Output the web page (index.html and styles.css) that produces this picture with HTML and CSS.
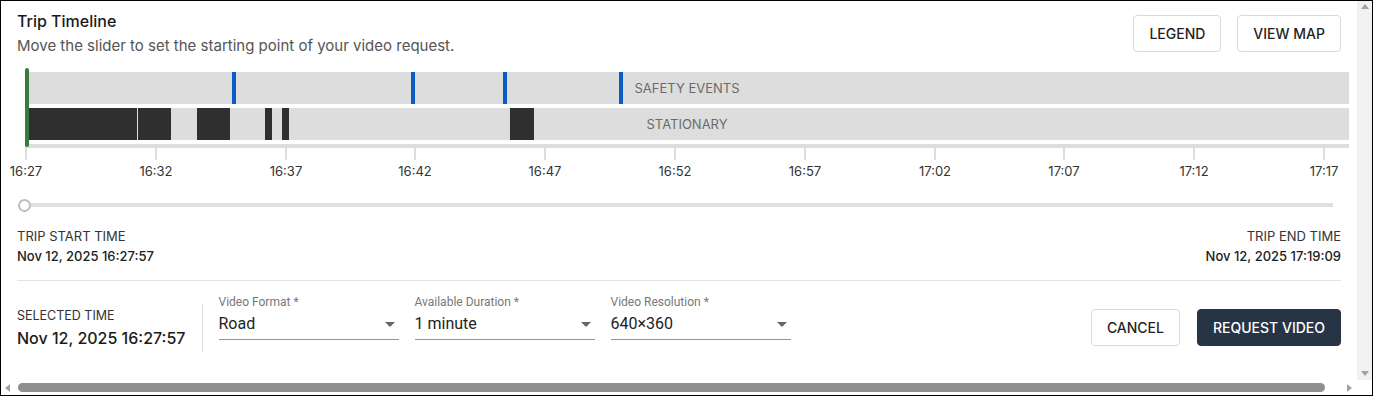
FILE: index.html
```html
<!DOCTYPE html>
<html lang="en">
  <head>
    <meta charset="utf-8" />
    <meta name="viewport" content="width=device-width, initial-scale=1.0" />
    <title>Trip Timeline</title>
    <link rel="stylesheet" href="styles.css">
  </head>

  <body>
    <div class="frame">
      <div class="view">
        <main class="content">
          <!-- ______HEADER______ -->
          <header class="top">
            <div>
              <h1>Trip Timeline</h1>
              <p class="hint">Move the slider to set the starting point of your video request.</p>
            </div>
            <div class="tools">
              <button class="btn">Legend</button>
              <button class="btn">View map</button>
            </div>
          </header>

          <!-- ______TIMELINE______ -->
          <section class="timeline">
            <div class="cursor"></div>
            <div class="lane">
              <span class="event" style="left:207px"></span>
              <span class="event" style="left:386px"></span>
              <span class="event" style="left:478px"></span>
              <span class="event" style="left:594px"></span>
              <span class="lane-name">Safety events</span>
            </div>
            <div class="lane">
              <span class="stop" style="left:0;width:112px"></span>
              <span class="stop" style="left:113px;width:33px"></span>
              <span class="stop" style="left:172px;width:33px"></span>
              <span class="stop" style="left:240px;width:7px"></span>
              <span class="stop" style="left:257px;width:7px"></span>
              <span class="stop" style="left:485px;width:24px"></span>
              <span class="lane-name">Stationary</span>
            </div>
            <div class="axis"></div>
            <div class="ticks">
              <span class="tick" style="left:0px"><b>16:27</b></span>
              <span class="tick" style="left:130px"><b>16:32</b></span>
              <span class="tick" style="left:260px"><b>16:37</b></span>
              <span class="tick" style="left:389px"><b>16:42</b></span>
              <span class="tick" style="left:519px"><b>16:47</b></span>
              <span class="tick" style="left:649px"><b>16:52</b></span>
              <span class="tick" style="left:779px"><b>16:57</b></span>
              <span class="tick" style="left:909px"><b>17:02</b></span>
              <span class="tick" style="left:1038px"><b>17:07</b></span>
              <span class="tick" style="left:1168px"><b>17:12</b></span>
              <span class="tick" style="left:1298px"><b>17:17</b></span>
            </div>
          </section>

          <div class="slider">
            <span class="knob"></span>
            <span class="track"></span>
          </div>

          <div class="trip-info">
            <div>
              <p class="small-label">Trip start time</p>
              <p class="small-value">Nov 12, 2025 16:27:57</p>
            </div>
            <div class="end">
              <p class="small-label">Trip end time</p>
              <p class="small-value">Nov 12, 2025 17:19:09</p>
            </div>
          </div>

          <hr class="line" />

          <!-- ______REQUEST ROW______ -->
          <div class="request">
            <div class="selected">
              <p class="sel-label">Selected time</p>
              <p class="sel-value">Nov 12, 2025 16:27:57</p>
            </div>
            <div class="vline"></div>
            <div class="field">
              <label>Video Format *</label>
              <div class="select">Road<span class="caret"></span></div>
            </div>
            <div class="field">
              <label>Available Duration *</label>
              <div class="select">1 minute<span class="caret"></span></div>
            </div>
            <div class="field">
              <label>Video Resolution *</label>
              <div class="select">640×360<span class="caret"></span></div>
            </div>
            <div class="actions">
              <button class="btn">Cancel</button>
              <button class="btn dark">Request video</button>
            </div>
          </div>
        </main>

        <div class="vbar">
          <span class="arrow up"></span>
          <span class="arrow down"></span>
        </div>
      </div>

      <div class="hbar">
        <span class="arrow left"></span>
        <span class="thumb"></span>
        <span class="arrow right"></span>
      </div>
    </div>
  </body>
</html>
```

FILE: styles.css
```css
* {
  box-sizing: border-box;
}

body {
  margin: 0;
  font-family: Inter, "Liberation Sans", sans-serif;
  color: #1f1f1f;
}

p,
h1 {
  margin: 0;
}

.frame {
  width: 1373px;
  height: 396px;
  border: 1px solid #000;
  display: flex;
  flex-direction: column;
  overflow: hidden;
}

.view {
  display: flex;
  height: 379px;
}

.content {
  flex: 1;
  padding: 10px 16px 0;
  overflow: hidden;
}

/*_____HEADER_____*/

.top {
  display: flex;
  justify-content: space-between;
}

h1 {
  font-size: 16px;
  font-weight: 500;
  line-height: 20px;
  color: #1a1a1a;
}

.hint {
  margin-top: 5px;
  font-size: 15px;
  line-height: 20px;
  color: #555;
}

.tools {
  display: flex;
  gap: 16px;
  margin-top: 4px;
}

.btn {
  height: 37px;
  padding: 0 15px;
  border: 1px solid #d9d9d9;
  border-radius: 4px;
  background: #fff;
  font-family: Inter, "Liberation Sans", sans-serif;
  font-size: 14px;
  font-weight: 500;
  color: #1f1f1f;
  text-transform: uppercase;
}

.btn.dark {
  background: #263445;
  border-color: #263445;
  color: #fff;
}

/*_____TIMELINE_____*/

.timeline {
  position: relative;
  margin: 12px -8px 0 8px;
  padding-top: 4px;
}

.cursor {
  position: absolute;
  left: 0;
  top: 0;
  width: 4px;
  height: 79px;
  border-radius: 2px;
  background: #3a7a3e;
  z-index: 2;
}

.lane {
  position: relative;
  height: 32px;
  margin-bottom: 4px;
  background: #dddddd;
  display: flex;
  align-items: center;
  justify-content: center;
}

.lane-name {
  font-size: 13px;
  color: #6b6b6b;
  text-transform: uppercase;
}

.event {
  position: absolute;
  top: 0;
  width: 4px;
  height: 32px;
  background: #0a5bc4;
}

.stop {
  position: absolute;
  top: 0;
  height: 32px;
  background: #2f2f2f;
}

.axis {
  height: 4px;
  background: #dddddd;
}

.ticks {
  position: relative;
  height: 31px;
}

.tick {
  position: absolute;
  top: 0;
  width: 2px;
  height: 12px;
  background: #dddddd;
}

.tick b {
  position: absolute;
  top: 15px;
  left: 50%;
  transform: translateX(-50%);
  font-size: 13px;
  font-weight: 400;
  line-height: 16px;
  color: #333;
}

/*_____SLIDER_____*/

.slider {
  display: flex;
  align-items: center;
  height: 14px;
  margin-top: 19px;
  padding-right: 8px;
}

.knob {
  width: 13px;
  height: 13px;
  margin-left: 1px;
  border: 2px solid #bdbdbd;
  border-radius: 50%;
  background: #fff;
}

.track {
  flex: 1;
  height: 4px;
  background: #e0e0e0;
}

.trip-info {
  display: flex;
  justify-content: space-between;
  margin-top: 16px;
}

.end {
  text-align: right;
}

.small-label {
  font-size: 13px;
  line-height: 16px;
  color: #333;
  text-transform: uppercase;
}

.small-value {
  margin-top: 4px;
  font-size: 13px;
  font-weight: 500;
  line-height: 16px;
  color: #222;
}

.line {
  margin: 16px 0 0;
  border: 0;
  border-top: 1px solid #e3e3e3;
}

/*_____REQUEST ROW_____*/

.request {
  display: flex;
  align-items: flex-start;
  margin-top: 14px;
}

.selected {
  margin-top: 12px;
}

.sel-label {
  font-size: 12.5px;
  line-height: 18px;
  color: #333;
  text-transform: uppercase;
}

.sel-value {
  margin-top: 2px;
  font-size: 16px;
  font-weight: 500;
  line-height: 22px;
  color: #1a1a1a;
}

.vline {
  width: 1px;
  height: 48px;
  margin: 9px 16px 0;
  background: #e0e0e0;
}

.field {
  width: 180px;
  margin-right: 16px;
  font-family: Roboto, "Liberation Sans", sans-serif;
}

.field label {
  display: block;
  font-size: 12px;
  line-height: 14px;
  color: #777;
}

.select {
  display: flex;
  justify-content: space-between;
  align-items: center;
  padding: 4px 0;
  font-size: 16px;
  line-height: 22px;
  color: #222;
  border-bottom: 1px solid #949494;
}

.caret {
  width: 0;
  height: 0;
  margin-right: 4px;
  border-left: 5px solid transparent;
  border-right: 5px solid transparent;
  border-top: 5px solid #666;
}

.actions {
  display: flex;
  gap: 17px;
  margin-left: auto;
  margin-top: 14px;
}

/*_____SCROLLBARS_____*/

.vbar {
  width: 15px;
  background: #f1f1f1;
  display: flex;
  flex-direction: column;
  justify-content: space-between;
  align-items: center;
  padding: 3px 0 4px;
}

.hbar {
  flex: 1;
  display: flex;
  align-items: center;
  padding: 0 20px 0 4px;
}

.thumb {
  flex: 1;
  height: 9px;
  margin: 0 22px 0 8px;
  border-radius: 5px;
  background: #8f8f8f;
}

.arrow {
  width: 0;
  height: 0;
}

.arrow.up {
  border-left: 4px solid transparent;
  border-right: 4px solid transparent;
  border-bottom: 5px solid #a3a3a3;
}

.arrow.down {
  border-left: 4px solid transparent;
  border-right: 4px solid transparent;
  border-top: 5px solid #a3a3a3;
}

.arrow.left {
  border-top: 4px solid transparent;
  border-bottom: 4px solid transparent;
  border-right: 5px solid #a3a3a3;
}

.arrow.right {
  border-top: 4px solid transparent;
  border-bottom: 4px solid transparent;
  border-left: 5px solid #a3a3a3;
}
```
